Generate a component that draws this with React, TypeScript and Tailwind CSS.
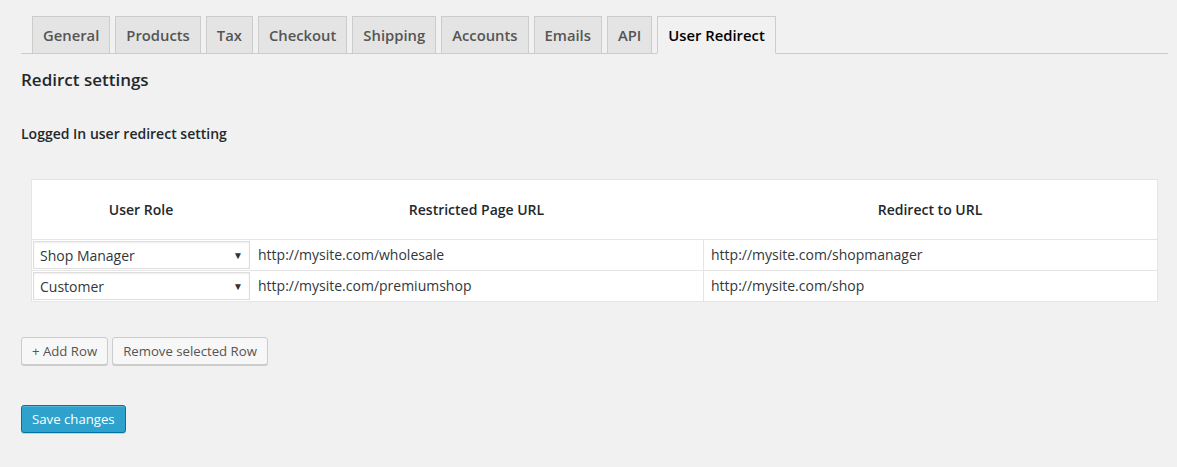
import React from 'react'

// Tabs across the top of the settings screen
const tabs = ['General', 'Products', 'Tax', 'Checkout', 'Shipping', 'Accounts', 'Emails', 'API', 'User Redirect']

const rows = [
  { role: 'Shop Manager', restricted: 'http://mysite.com/wholesale', redirect: 'http://mysite.com/shopmanager' },
  { role: 'Customer', restricted: 'http://mysite.com/premiumshop', redirect: 'http://mysite.com/shop' },
]

export default function App() {
  return (
    <div
      className="min-h-[467px] w-[1177px] bg-[#f1f1f1] text-[#444] overflow-hidden"
      style={{ fontFamily: '"Open Sans", "Noto Sans", Arial, sans-serif' }}
    >
      <div className="pl-[21px] pr-[9px] pt-[16px]">
        {/* Tab bar */}
        <div className="flex gap-[5px] border-b border-[#ccc] pl-[11px]">
          {tabs.map(tab => {
            const active = tab === 'User Redirect'
            return (
              <div
                key={tab}
                className={
                  active
                    ? 'px-[10px] py-[6px] text-[14.8px] leading-[24px] font-semibold border border-[#ccc] border-b-[#f1f1f1] -mb-px bg-[#f1f1f1] text-black'
                    : 'px-[10px] py-[6px] text-[14.8px] leading-[24px] font-semibold border border-[#ccc] border-b-0 bg-[#e4e4e4] text-[#555]'
                }
              >
                {tab}
              </div>
            )
          })}
        </div>

        <h2 className="mt-[15px] text-[17px] leading-[22px] font-semibold text-[#23282d]">Redirct settings</h2>
        <h3 className="mt-[33px] text-[14px] leading-[20px] font-semibold text-[#23282d]">Logged In user redirect setting</h3>

        {/* Redirect rules table */}
        <div className="mt-[35px] ml-[10px] w-[1127px] bg-white border border-[#e5e5e5] text-[14px]">
          <div className="flex h-[59px] items-center font-semibold text-[#23282d]">
            <div className="w-[218px] text-center">User Role</div>
            <div className="w-[453px] text-center">Restricted Page URL</div>
            <div className="flex-1 text-center">Redirect to URL</div>
          </div>
          {rows.map(row => (
            <div key={row.role} className="flex h-[31px] border-t border-[#e5e5e5] text-[#32373c]">
              <div className="w-[218px] pl-px pt-px">
                <div className="flex h-[28px] w-[217px] items-center justify-between border border-[#ddd] pl-[6px] pr-[6px] shadow-[inset_0_1px_2px_rgba(0,0,0,0.07)]">
                  <span>{row.role}</span>
                  <span className="text-[10px] text-[#333]">▼</span>
                </div>
              </div>
              <div className="flex w-[453px] items-center pl-[8px] pb-px">{row.restricted}</div>
              <div className="flex flex-1 items-center border-l border-[#e5e5e5] pl-[7px] pb-px">{row.redirect}</div>
            </div>
          ))}
        </div>

        {/* Row actions */}
        <div className="mt-[35px] flex gap-[4px] text-[13.2px]">
          <button className="h-[28px] px-[10px] pb-px leading-[26px] bg-[#f7f7f7] border border-[#ccc] rounded-[3px] text-[#555] shadow-[0_1px_0_#ccc]">
            + Add Row
          </button>
          <button className="h-[28px] px-[10px] pb-px leading-[26px] bg-[#f7f7f7] border border-[#ccc] rounded-[3px] text-[#555] shadow-[0_1px_0_#ccc]">
            Remove selected Row
          </button>
        </div>

        <button className="mt-[40px] h-[28px] px-[10px] pb-px leading-[26px] text-[13.2px] bg-[#2ea2cc] border border-[#0074a2] rounded-[3px] text-white shadow-[inset_0_1px_0_rgba(120,200,230,0.5),0_1px_0_rgba(0,0,0,0.15)]">
          Save changes
        </button>
      </div>
    </div>
  )
}
